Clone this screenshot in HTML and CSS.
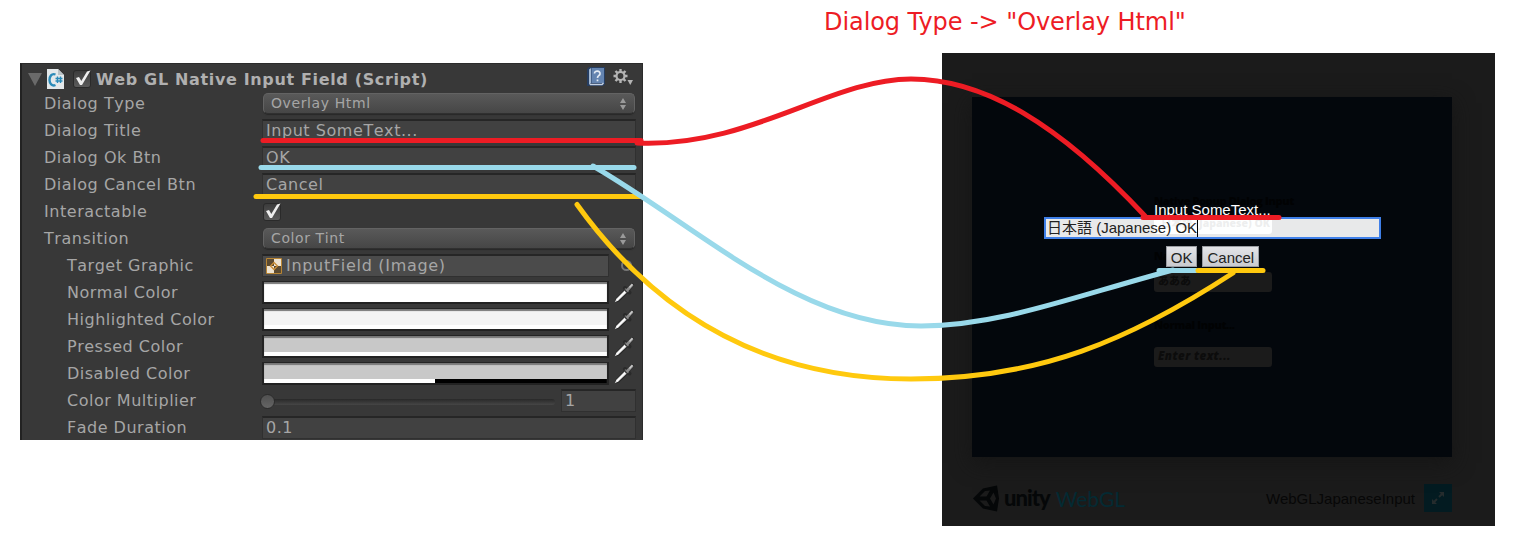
FILE: index.html
```html
<!DOCTYPE html>
<html lang="en">
<head>
<meta charset="utf-8">
<title>Web GL Native Input Field</title>
<link rel="stylesheet" href="styles.css">
</head>
<body>
<svg class="defs" width="0" height="0">
  <symbol id="pick" viewBox="0 0 22 22">
    <path d="M1 21 3 16 12 7 15.500 10.500 6 19.500Z" fill="#252525"/>
    <path d="M1.500 20.500 3.500 16.500 12 8 14.200 10.200 5.500 18.500Z" fill="#c9c9c9"/>
    <path d="M3.500 18.500 12.500 9.500" stroke="#fff" stroke-width="1.700"/>
    <path d="M12 6 16.500 10.500M14 8.500 19 3" stroke="#2a2a2a" stroke-width="4" stroke-linecap="round"/>
    <path d="M12 6.500 16 10.500" stroke="#666" stroke-width="1.600" stroke-dasharray="2 1"/>
    <path d="M13.500 9 19.500 2.500" stroke="#8c8c8c" stroke-width="2.600"/>
    <path d="M16.500 5.500 19.500 2.200" stroke="#c8c8c8" stroke-width="1.500"/>
  </symbol>
  <symbol id="tick" viewBox="0 0 18 18">
    <path d="M3 8 6 7 8.300 11 14 1.500 17.500 .5 9 15 7 15Z" fill="#eee"/>
  </symbol>
  <symbol id="updown" viewBox="0 0 6 12">
    <path d="M0 5 3 0 6 5ZM0 7 3 12 6 7Z" fill="#9a9a9a"/>
  </symbol>
</svg>
<main class="page">
  <section class="inspector">
    <header class="head">
      <svg class="fold" width="14" height="13" viewBox="0 0 14 13"><path d="M0 0H14L7 13Z" fill="#6a6a6a"/></svg>
      <svg class="script" width="17" height="20" viewBox="0 0 17 20">
        <path d="M0 0H11L17 6V20H0Z" fill="#e3e8ea"/><path d="M11 0V6H17Z" fill="#b9c2c6"/>
        <path d="M8.500 5.500C4.500 4 2.500 7.500 2.500 11S5 17.500 8.500 16" fill="none" stroke="#2a8ab8" stroke-width="2.400"/>
        <path d="M10.500 7.500V14M13.500 7.500V14M8.500 9.500H15.500M8.500 12H15.500" stroke="#2a8ab8" stroke-width="1.400"/>
      </svg>
      <span class="check"><svg width="18" height="18"><use href="#tick"/></svg></span>
      <h1 class="title">Web GL Native Input Field (Script)</h1>
      <svg class="book" width="18" height="20" viewBox="0 0 18 20">
        <path d="M0 2 2 0H18V17L16 19H0Z" fill="#263d60"/><path d="M2 2.500 4 1V16L2 18Z" fill="#a3b8d2"/>
        <path d="M4.500 1H17V16H4.500Z" fill="#6484b0"/><path d="M3 17.500H15L16.500 16" fill="none" stroke="#c4d0e0" stroke-width="1.500"/>
        <path d="M7.500 6.500C7.500 3 13.500 3.500 13 7C12.600 9 10.500 8.500 10.500 11M10.500 12.500V14.300" fill="none" stroke="#e3eaf3" stroke-width="1.700"/>
      </svg>
      <svg class="gear" width="21" height="17" viewBox="0 0 21 17">
        <circle cx="7.500" cy="7" r="4" fill="none" stroke="#b4b4b4" stroke-width="2.200"/>
        <path d="M7.500 0V3M7.500 11V14M.5 7H3.500M11.500 7H14.500M2.500 2 4.700 4.200M10.300 9.800 12.500 12M2.500 12 4.700 9.800M10.300 4.200 12.500 2" stroke="#b4b4b4" stroke-width="2.400"/>
        <path d="M14.500 11H20L17.250 16Z" fill="#b4b4b4"/>
      </svg>
    </header>
    <div class="row"><span class="label">Dialog Type</span><div class="select">Overlay Html<svg width="6" height="12"><use href="#updown"/></svg></div></div>
    <div class="row"><span class="label">Dialog Title</span><div class="field">Input SomeText...</div></div>
    <div class="row"><span class="label">Dialog Ok Btn</span><div class="field">OK</div></div>
    <div class="row"><span class="label">Dialog Cancel Btn</span><div class="field">Cancel</div></div>
    <div class="row"><span class="label">Interactable</span><span class="check"><svg width="18" height="18"><use href="#tick"/></svg></span></div>
    <div class="row"><span class="label">Transition</span><div class="select">Color Tint<svg width="6" height="12"><use href="#updown"/></svg></div></div>
    <div class="row sub"><span class="label">Target Graphic</span>
      <div class="field object">
        <svg width="16" height="16" viewBox="0 0 16 16"><path d="M.5.5H15.500V15.500H.5Z" fill="#5b4a30" stroke="#b98532"/><path d="M8 1H15V8H8ZM1 8H8V15H1Z" fill="#eee3d0"/><path d="M8 4.500 11.500 8 8 11.500 4.500 8Z" fill="none" stroke="#c98d35" stroke-width="1.300"/></svg>
        InputField (Image)</div>
      <span class="target"></span>
    </div>
    <div class="row sub"><span class="label">Normal Color</span><div class="swatch white"></div><svg class="pick" width="22" height="22"><use href="#pick"/></svg></div>
    <div class="row sub"><span class="label">Highlighted Color</span><div class="swatch light"></div><svg class="pick" width="22" height="22"><use href="#pick"/></svg></div>
    <div class="row sub"><span class="label">Pressed Color</span><div class="swatch grey"></div><svg class="pick" width="22" height="22"><use href="#pick"/></svg></div>
    <div class="row sub"><span class="label">Disabled Color</span><div class="swatch grey half"></div><svg class="pick" width="22" height="22"><use href="#pick"/></svg></div>
    <div class="row sub"><span class="label">Color Multiplier</span><div class="slider"><span class="knob"></span></div><div class="field number">1</div></div>
    <div class="row sub"><span class="label">Fade Duration</span><div class="field">0.1</div></div>
  </section>

  <section class="preview">
    <h2 class="caption">Dialog Type -&gt; "Overlay Html"</h2>
    <div class="browser">
      <div class="canvas">
        <div class="game">
          <b class="g-label">Native Popup Dialog Input</b>
          <div class="g-input bright">日本語 (Japanese) OK</div>
          <b class="g-label second">Native Input</b>
          <div class="g-input">あああ</div>
          <b class="g-label third">Normal Input...</b>
          <div class="g-input"><i>Enter text...</i></div>
        </div>
        <div class="dialog">
          <div class="d-title">Input SomeText...</div>
          <div class="d-input">日本語 (Japanese) OK<span class="caret"></span></div>
          <div class="d-buttons"><span class="btn">OK</span><span class="btn">Cancel</span></div>
        </div>
      </div>
      <footer class="foot">
        <svg width="28" height="29" viewBox="0 0 28 29"><path d="M1 14.500 11 4.500 25 1.500 27 14.500 25 27.500 11 24.500Z" fill="#050708"/><path d="M7.500 12.500 13 7 18 6.500 14.500 12.500ZM7.500 16.500H14.500L18 22.500 13 22ZM21.500 8.500 24 14.500 21.500 20.500 18 14.500Z" fill="#1b1b1b"/></svg>
        <b class="unity">unity</b><span class="webgl">WebGL</span>
        <span class="name">WebGLJapaneseInput</span>
        <svg class="full" width="28" height="28" viewBox="0 0 28 28"><path d="M0 0H28V28H0Z" fill="#031b21"/><path d="M15 8H20V13L18.200 11.200 15.700 13.700 14.300 12.300 16.800 9.800ZM8 15 9.800 16.800 12.300 14.300 13.700 15.700 11.200 18.200 13 20H8Z" fill="#252c2d"/></svg>
      </footer>
    </div>
  </section>

  <svg class="marks" width="1539" height="557" viewBox="0 0 1539 557">
    <g class="yellow"><path d="M256 196.500H640"/><path d="M577 204.500C660 320 770 379 911 379C1040 379 1130 340 1233 273"/></g>
    <g class="blue"><path d="M261 167.500H634"/><path d="M593 166C700 228 800 326 921 326C1000 326 1075 296 1173 270"/><path d="M1159 270.500H1196"/></g>
    <path class="yellow" d="M1198 270.500H1263"/>
    <g class="red"><path d="M263 140.500H641"/><path d="M637 143C750 148 830 79 911 79C985 79 1060 125 1145 216"/><path d="M1143 217.500H1279"/></g>
  </svg>
</main>
</body>
</html>
```
FILE: styles.css
```css
* { box-sizing: border-box; }
body { margin: 0; background: #fff; }
.defs { position: absolute; }
svg { flex: none; }
.page { position: relative; display: flex; align-items: flex-start; width: 1539px; height: 557px; padding-left: 20px; overflow: hidden; }

.inspector {
  width: 623px; height: 377px; margin-top: 63px; overflow: hidden;
  background: #383838; border-left: 2px solid #222; border-top: 1px solid #2b2b2b; border-right: 1px solid #2b2b2b;
  color: #a6a6a6; font: 16px/27px "DejaVu Sans", sans-serif; letter-spacing: .55px; font-kerning: none;
}
.head { display: flex; align-items: center; height: 26px; padding: 4px 8px 0 6px; }
.script { margin-left: 5px; }
.head .check { margin-left: 9px; }
.check { display: flex; width: 18px; height: 18px; background: linear-gradient(#3c3c3c, #5b5b5b); border: 1px solid #2a2a2a; border-radius: 3px; }
.check svg { margin: -1px; }
.title { margin: 0 auto 0 5px; font-size: 16px; font-weight: 700; letter-spacing: .65px; color: #b0b0b0; white-space: nowrap; }
.book { margin: -4px 8px 0 0; }
.gear { margin-top: -4px; }
.row { display: flex; align-items: center; height: 27px; padding-left: 22px; }
.label { width: 218px; flex: none; white-space: nowrap; }
.sub { padding-left: 45px; }
.sub .label { width: 195px; letter-spacing: .5px; }
.row > .check { margin-left: 1px; }
.field { width: 374px; height: 23px; padding-left: 3px; background: #414141; border: 1px solid #303030; border-top: 2px solid #262626; white-space: nowrap; }
.row .field { line-height: 20px; }
.select { display: flex; justify-content: space-between; align-items: center; width: 372px; height: 21px; margin-left: 1px; padding: 0 8px 0 7px; background: linear-gradient(#595959, #464646); border: 1px solid #636363; border-bottom-color: #303030; border-radius: 5px; font-size: 14px; line-height: 17px; letter-spacing: .6px; box-shadow: 0 1px 1px #282828; }
.object { display: flex; align-items: center; gap: 4px; width: 347px; background: #4b4b4b; letter-spacing: .7px; }
.target { width: 11px; height: 11px; margin-left: 12px; border: 2px solid #777; border-radius: 50%; }
.swatch { width: 347px; height: 23px; border: 2px solid #242424; border-width: 1px 2px 2px; border-bottom-color: #222; box-shadow: inset 0 2px 1px #777; }
.white { background: #fff; }
.light { background: linear-gradient(#f4f4f4 80%, #fff 80%); }
.grey { background: linear-gradient(#c8c8c8 80%, #fff 80%); }
.half { background: linear-gradient(#c8c8c8 80%, transparent 80%), linear-gradient(90deg, #fff 50%, #000 50%); }
.pick { margin-left: 4px; }
.slider { display: flex; align-items: center; width: 293px; height: 6px; margin-top: 2px; background: linear-gradient(#292929, #464646); border-radius: 3px; }
.knob { width: 15px; height: 15px; margin-left: -2px; background: linear-gradient(#505050, #656565); border: 1px solid #2b2b2b; border-radius: 50%; }
.number { width: 75px; margin-left: 6px; }

.preview { margin-left: 299px; width: 553px; }
.caption { height: 53px; margin: 0 0 0 -118px; padding-top: 8px; font: 24px/28px "DejaVu Sans", sans-serif; letter-spacing: -.07px; color: #ed1c24; white-space: nowrap; }
.browser { height: 473px; padding: 44px 43px 0 30px; background: #1b1b1b; }
.canvas { position: relative; height: 360px; background: #03070c; box-shadow: 0 6px 20px #151515; }
.game { padding: 96px 0 0 182px; font: 11px/16px "Open Sans", sans-serif; color: #010203; }
.g-label { display: block; height: 24px; font-weight: 800; font-size: 11px; letter-spacing: -.35px; white-space: nowrap; }
.g-input { width: 118px; height: 20px; padding: 1px 4px; background: #1b1b1b; border-radius: 3px; font-weight: 800; font-family: "Open Sans", "Noto Sans CJK JP", sans-serif; white-space: nowrap; color: #0c0c0c; }
.bright { height: 17px; padding-left: 7px; font-size: 10.5px; line-height: 10px; background: #fff; color: #404040; }
.g-input i { font-size: 11.5px; letter-spacing: .4px; }
.second { margin-top: 14px; }
.third { margin-top: 25px; height: 30px; }
.dialog { position: absolute; left: 72px; top: 104px; width: 337px; font: 15px/17px "Liberation Sans", "Noto Sans CJK JP", sans-serif; color: #fff; }
.d-title { height: 16px; padding-left: 110px; }
.d-input { display: flex; align-items: center; height: 22px; padding-left: 1px; background: rgba(253, 255, 255, .91); background: rgba(254, 255, 255, .915); background-clip: padding-box; border: 2px solid #3f7fe8; color: #222; line-height: 18px; white-space: nowrap; overflow: hidden; }
.caret { width: 1px; height: 17px; background: #000; }
.d-buttons { display: flex; justify-content: center; gap: 5px; padding-top: 7px; }
.btn { height: 21px; padding: 0 4px; background: linear-gradient(#e3e4e8, #c9cbd0); border: 1px solid #999ca2; color: #222; line-height: 21px; }
.foot { display: flex; align-items: center; height: 28px; margin-top: 27px; font-family: "Liberation Sans", sans-serif; }
.unity { margin-left: 4px; font: 900 22px/26px "Lato", sans-serif; letter-spacing: -1px; color: #050708; }
.webgl { margin-left: 6px; font: 21px/27px "Lato", sans-serif; color: #042a33; }
.name { margin: 0 9px 0 auto; font-size: 15px; color: #070707; }
.marks { position: absolute; left: 0; top: 0; }
.marks path { fill: none; stroke-width: 5; stroke-linecap: round; stroke-linejoin: round; }
.red { stroke: #ed1c24; }
.blue { stroke: #99d9ea; }
.yellow { stroke: #ffc90e; }
```
